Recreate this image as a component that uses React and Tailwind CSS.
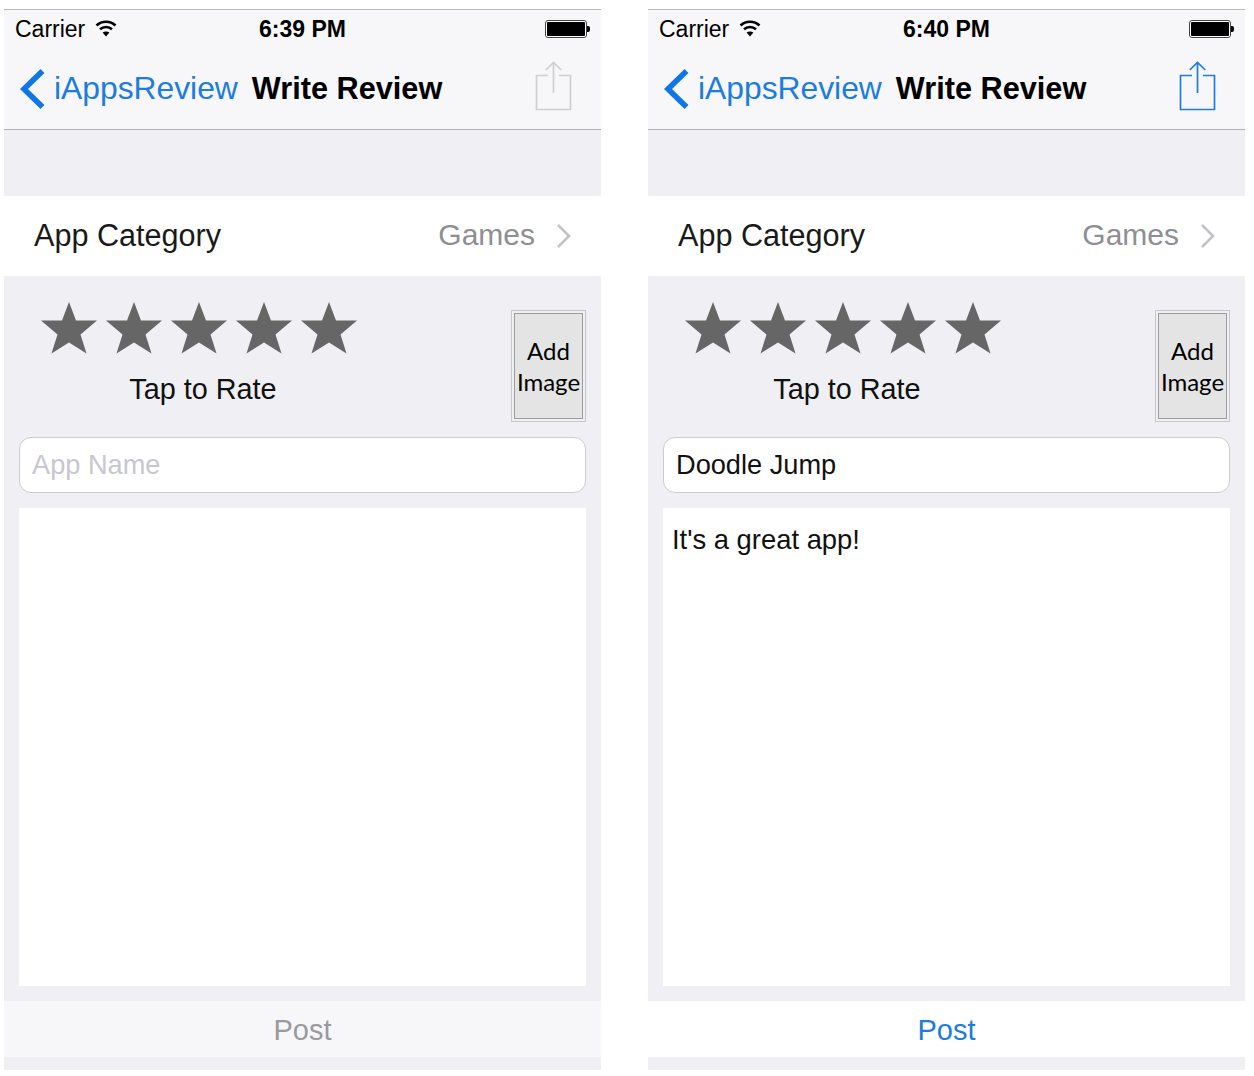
import React from 'react'

const Wifi = () => (
  <svg width="22" height="18" viewBox="0 0 22 18" fill="none" stroke="#000" strokeWidth="2.6" className="mb-[4px]">
    <path d="M1.5 6.5C6.8 1.5 15.2 1.5 20.5 6.5" />
    <path d="M5 10.3C8.4 7.2 13.6 7.2 17 10.3" />
    <path d="M11 17.5L7.6 13.6C9.6 12 12.4 12 14.4 13.6Z" fill="#000" stroke="none" />
  </svg>
)

const Battery = () => (
  <div className="flex items-center -mt-[2px]">
    <div className="w-[42px] h-[18px] rounded-[3px] border border-[#444] p-[1px] bg-white">
      <div className="h-full rounded-[1px] bg-black" />
    </div>
    <div className="w-[3px] h-[6px] rounded-r-[2px] bg-black" />
  </div>
)

const ShareIcon = ({ color }) => (
  <svg width="37" height="50" viewBox="0 0 37 50" fill="none" stroke={color} strokeWidth="1.7">
    <path d="M13 14.5H1.5V48.5H35.5V14.5H24" />
    <path d="M18.5 32V1.5" />
    <path d="M10.75 9L18.5 1.5L26.25 9" />
  </svg>
)

const Star = () => (
  <svg width="56" height="52" viewBox="0 0 56 52" fill="#666666">
    <path d="M28 0L35 18.5H56L39.5 32.5L45.5 51.5L28 40.5L10.5 51.5L16.5 32.5L0 18.5H21Z" />
  </svg>
)

const Screen = ({ time, shareColor, appName, review, postActive }) => {
  return (
    <div className="w-[597px] h-[1061px] flex flex-col bg-[#efeff4] border-t border-[#b9b9b9]">
      <div className="h-[120px] bg-[#f7f7f9] border-b border-[#b2b2b2] shrink-0">
        <div className="h-[39px] grid grid-cols-3 items-center pl-[11px] pr-[11px] text-[23px] text-black">
          <div className="flex items-center gap-[10px]">
            <span>Carrier</span>
            <Wifi />
          </div>
          <div className="text-center font-bold">{time}</div>
          <div className="flex justify-end">
            <Battery />
          </div>
        </div>
        <div className="h-[80px] flex items-center pl-[15px] pr-[29px]">
          <svg width="26" height="40" viewBox="0 0 26 40" fill="none" stroke="#0f76ea" strokeWidth="5.6">
            <path d="M23.5 2L5 20L23.5 38" />
          </svg>
          <span className="ml-[9px] text-[31.8px] text-[#1c7ce0]">iAppsReview</span>
          <span className="ml-[14px] text-[30.7px] font-bold text-black">Write Review</span>
          <div className="ml-auto mb-[6px]">
            <ShareIcon color={shareColor} />
          </div>
        </div>
      </div>

      <div className="h-[66px] shrink-0" />

      <div className="h-[80px] shrink-0 bg-white flex items-center pl-[30px] pr-[30px] pb-[4px] text-[30.6px]">
        <span className="mt-[3px] text-[#1a1a1a]">App Category</span>
        <span className="ml-auto text-[30px] text-[#8e8e93]">Games</span>
        <svg width="15" height="26" viewBox="0 0 15 26" fill="none" stroke="#c2c2c7" strokeWidth="2.6" className="ml-[21px] mt-[4px]">
          <path d="M2 2L13 13L2 24" />
        </svg>
      </div>

      <div className="flex-1 flex flex-col px-[15px]">
        <div className="flex h-[161px] shrink-0">
          <div className="w-[368px] pl-[22px] pt-[26px] flex flex-col">
            <div className="flex gap-[9px]">
              <Star />
              <Star />
              <Star />
              <Star />
              <Star />
            </div>
            <div className="mt-[14px] w-[324px] text-center text-[28.8px] text-[#111]">Tap to Rate</div>
          </div>
          <div className="ml-auto mt-[34px] w-[75px] h-[112px] border border-[#c8c8c8] p-[2px]">
            <div className="h-full flex items-center justify-center text-center bg-[#e4e4e4] border border-[#9c9c9c] font-['Lato',sans-serif] text-[24px] leading-[31px] text-black">
              Add Image
            </div>
          </div>
        </div>

        <div className="h-[56px] shrink-0 bg-white border border-[#cccccc] rounded-[12px] flex items-center px-[12px] text-[27.2px]">
          <span className={appName ? 'text-[#111]' : 'text-[#c7c7cd]'}>{appName || 'App Name'}</span>
        </div>

        <div className="mt-[15px] h-[478px] shrink-0 bg-white px-[9px] pt-[11px] text-[27.4px] text-[#111]">
          {review}
        </div>
      </div>

      <div
        className={
          'h-[56px] shrink-0 pt-[3px] flex items-center justify-center text-[29px] ' +
          (postActive ? 'bg-white text-[#1c7ce0]' : 'bg-[#f7f7f9] text-[#9a9a9e]')
        }
      >
        Post
      </div>
      <div className="h-[13px] shrink-0" />
    </div>
  )
}

const App = () => {
  return (
    <div className="w-[1254px] h-[1076px] bg-white flex gap-[47px] pl-[4px] pt-[9px] font-['Liberation_Sans',sans-serif]">
      <Screen time="6:39 PM" shareColor="#cfcfd2" appName="" review="" postActive={false} />
      <Screen time="6:40 PM" shareColor="#1c7ce0" appName="Doodle Jump" review="It's a great app!" postActive />
    </div>
  )
}

export default App
